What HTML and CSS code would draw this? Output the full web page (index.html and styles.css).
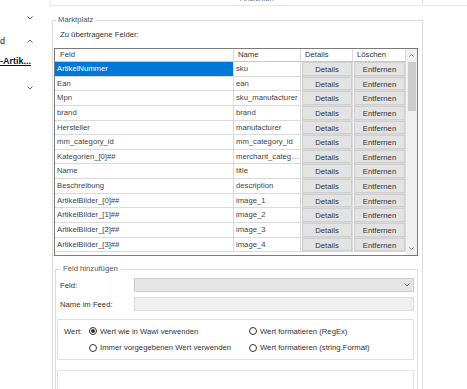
FILE: index.html
```html
<!DOCTYPE html>
<html lang="de">
<head>
    <meta charset="UTF-8">
    <meta name="viewport" content="width=device-width, initial-scale=1.0">
    <title>Marktplatz</title>
    <link rel="stylesheet" href="styles.css">
</head>
<body>
    <div class="nav">
        <div class="nav-item item-1">
            <span></span>
            <svg class="chev" width="6" height="4" viewBox="0 0 6 4"><polyline points="0.5,0.5 3,3 5.5,0.5"/></svg>
        </div>
        <div class="nav-item item-2">
            <span>d</span>
            <svg class="chev" width="6" height="4" viewBox="0 0 6 4"><polyline points="0.5,3.5 3,1 5.5,3.5"/></svg>
        </div>
        <div class="nav-item item-3">
            <a class="nav-link">-Artik...</a>
        </div>
        <div class="nav-item item-4">
            <span></span>
            <svg class="chev" width="6" height="4" viewBox="0 0 6 4"><polyline points="0.5,0.5 3,3 5.5,0.5"/></svg>
        </div>
    </div>

    <div class="main">
        <div class="topbar">
            <div class="topbox"><span class="topbox-title">Ansichten</span></div>
        </div>

        <fieldset class="group market">
            <legend>Marktplatz</legend>
            <div class="caption">Zu übertragene Felder:</div>

            <div class="list">
                <div class="grid" id="fieldGrid">
                    <div class="head">Feld</div>
                    <div class="head">Name</div>
                    <div class="head">Details</div>
                    <div class="head">Löschen</div>
                </div>
                <div class="scrollbar">
                    <div class="scroll-btn">
                        <svg width="5" height="3" viewBox="0 0 5 3"><polyline points="0.5,2.5 2.5,0.5 4.5,2.5"/></svg>
                    </div>
                    <div class="scroll-thumb"></div>
                    <div class="scroll-track"></div>
                    <div class="scroll-btn">
                        <svg width="5" height="3" viewBox="0 0 5 3"><polyline points="0.5,0.5 2.5,2.5 4.5,0.5"/></svg>
                    </div>
                </div>
            </div>

            <fieldset class="group add">
                <legend>Feld hinzufügen</legend>
                <div class="form-row">
                    <label>Feld:</label>
                    <div class="combo">
                        <svg width="6" height="4" viewBox="0 0 6 4"><polyline points="0.5,0.5 3,3 5.5,0.5"/></svg>
                    </div>
                </div>
                <div class="form-row">
                    <label>Name im Feed:</label>
                    <div class="textbox"></div>
                </div>

                <div class="value-box">
                    <span class="value-label">Wert:</span>
                    <label class="radio checked"><span class="circle"></span>Wert wie in Wawi verwenden</label>
                    <label class="radio"><span class="circle"></span>Wert formatieren (RegEx)</label>
                    <label class="radio"><span class="circle"></span>Immer vorgegebenen Wert verwenden</label>
                    <label class="radio"><span class="circle"></span>Wert formatieren (string.Format)</label>
                </div>

                <div class="extra-box"></div>
            </fieldset>
        </fieldset>
    </div>

    <script>
        const fields = [
            ['ArtikelNummer', 'sku'],
            ['Ean', 'ean'],
            ['Mpn', 'sku_manufacturer'],
            ['brand', 'brand'],
            ['Hersteller', 'manufacturer'],
            ['mm_category_id', 'mm_category_id'],
            ['Kategorien_[0]##', 'merchant_category'],
            ['Name', 'title'],
            ['Beschreibung', 'description'],
            ['ArtikelBilder_[0]##', 'image_1'],
            ['ArtikelBilder_[1]##', 'image_2'],
            ['ArtikelBilder_[2]##', 'image_3'],
            ['ArtikelBilder_[3]##', 'image_4']
        ];
        const grid = document.getElementById('fieldGrid');

        fields.forEach(function (f, i) {
            const feld = document.createElement('div');
            feld.className = i === 0 ? 'cell sel' : 'cell';
            feld.textContent = f[0];
            const name = document.createElement('div');
            name.className = 'cell';
            name.textContent = f[1];
            grid.appendChild(feld);
            grid.appendChild(name);

            ['Details', 'Entfernen'].forEach(function (label) {
                const cell = document.createElement('div');
                cell.className = 'cell btn-cell';
                const btn = document.createElement('button');
                btn.textContent = label;
                cell.appendChild(btn);
                grid.appendChild(cell);
            });
        });
    </script>
</body>
</html>
```

FILE: styles.css
```css
html { overflow: hidden; }
body { margin: 0; width: 467px; height: 389px; overflow: hidden; display: flex; background: #fff; font-family: "Liberation Sans", Arial, sans-serif; font-size: 7.7px; color: #1e1e1e; }

/* left navigation */
.nav { width: 50px; flex: none; font-size: 9px; }
.nav-item { display: flex; justify-content: space-between; align-items: center; height: 11px; padding-right: 17px; }
.item-1 { margin-top: 12px; }
.item-2 { margin-top: 12px; }
.item-3 { margin-top: 9px; }
.item-4 { margin-top: 16px; }
.nav-link { font-weight: bold; text-decoration: underline; color: #111; }
.chev polyline { fill: none; stroke: #666; stroke-width: 1; }

/* main area */
.main { flex: 1; min-width: 0; height: 389px; overflow: hidden; }
.topbar { height: 5px; border-bottom: 1px solid #e6e6e6; }
.topbox { width: 373px; height: 5px; box-sizing: border-box; border-left: 1px solid #ececec; border-right: 1px solid #e0e0e0; overflow: hidden; padding-left: 189px; }
.topbox-title { display: block; margin-top: -5px; line-height: 8px; color: #777; }

.group { margin: 0; border: 1px solid #dcdcdc; border-bottom: none; box-sizing: border-box; min-width: 0; }
.group legend { padding: 0 2px; line-height: 10px; color: #555; }
.market { width: 371px; height: 374px; margin: 9px 0 0 2px; padding: 5px 3px 0 1px; }
.market legend { margin-left: 2px; }
.caption { margin-left: 6px; line-height: 10px; color: #333; }

/* field list */
.list { display: flex; width: 364px; height: 208px; margin-top: 8px; border: 1px solid #7a7a7a; box-sizing: border-box; }
.grid { display: grid; grid-template-columns: 179px 67px 52px 53px; grid-template-rows: 13px; grid-auto-rows: 14.65px; align-content: start; }
.head, .cell { border-right: 1px solid #dadada; border-bottom: 1px solid #dadada; box-sizing: border-box; white-space: nowrap; overflow: hidden; text-overflow: ellipsis; }
.head { padding-left: 4px; line-height: 12px; color: #333; border-bottom-color: #c8c8c8; }
.head:first-child { padding-left: 5px; }
.cell { padding-left: 2px; line-height: 13.65px; color: #444; }
.cell.sel { background: #0078d7; color: #fff; }
.btn-cell { padding: 0 0 0 1px; }
.btn-cell button { display: block; width: 100%; height: 100%; margin: 0; padding: 0; border: 1px solid #cfcfcf; background: #e3e3e3; font: inherit; color: #333; }

.scrollbar { width: 11px; display: flex; flex-direction: column; background: #f0f0f0; }
.scroll-btn { height: 13px; display: flex; align-items: center; justify-content: center; }
.scroll-btn polyline { fill: none; stroke: #777; stroke-width: 1; }
.scroll-thumb { height: 49px; margin: 0 1px 0 2px; background: #cdcdcd; }
.scroll-track { flex: 1; }

/* add field */
.add { width: 363px; height: 125px; margin: 8px 0 0 1px; padding: 4px 3px 0 1px; }
.add legend { margin-left: 4px; }
.form-row { display: flex; align-items: center; margin-bottom: 5px; padding-left: 3px; }
.form-row label { width: 74px; flex: none; color: #333; }
.combo { flex: 1; height: 14px; box-sizing: border-box; border: 1px solid #cccccc; background: #e5e5e5; display: flex; align-items: center; justify-content: flex-end; padding-right: 3px; }
.combo polyline { fill: none; stroke: #777; stroke-width: 1; }
.textbox { flex: 1; height: 14px; box-sizing: border-box; border: 1px solid #dcdcdc; background: #f0f0f0; }

.value-box { display: grid; grid-template-columns: 25px 160px 1fr; grid-auto-rows: 16.5px; align-items: center; height: 41px; box-sizing: border-box; margin-top: 8px; padding: 3px 0 0 6px; border: 1px solid #e0e0e0; color: #333; }
.value-label { grid-row: 1; }
.radio { display: flex; align-items: center; gap: 3px; }
.radio:nth-of-type(3) { grid-column: 2; }
.circle { width: 8px; height: 8px; box-sizing: border-box; border: 1px solid #333; border-radius: 50%; display: flex; align-items: center; justify-content: center; }
.checked .circle::after { content: ""; width: 4px; height: 4px; border-radius: 50%; background: #333; }

.extra-box { height: 19px; margin-top: 10px; border: 1px solid #e3e3e3; border-bottom: none; box-sizing: border-box; }
```
